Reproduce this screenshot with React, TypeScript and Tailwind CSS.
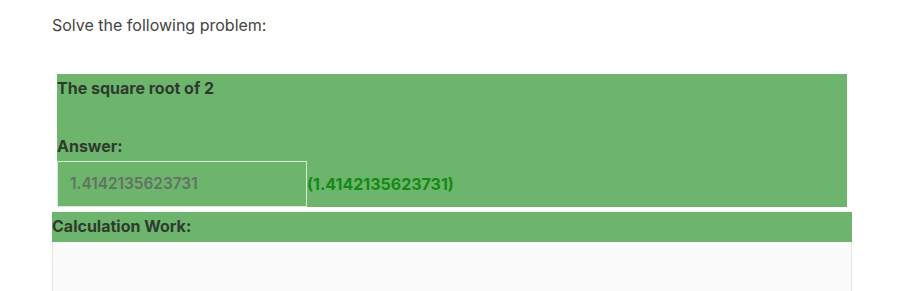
export default function App() {
  return (
    <div className="min-h-screen bg-white font-['Inter',sans-serif] text-[16px]">
      <div className="w-[800px] ml-[52px] pt-[14px]">
        <p className="text-[#444] leading-[22px]">Solve the following problem:</p>
        <div className="mt-[38px] ml-[5px] w-[790px] h-[133px] bg-[#6db56d] flex flex-col">
          <p className="mt-[4px] font-bold text-[#2f3a2f] leading-[20px]">The square root of 2</p>
          <p className="mt-[38px] font-bold text-[#2f3a2f] leading-[20px]">Answer:</p>
          <div className="mt-[5px] flex items-center">
            <div className="w-[250px] h-[46px] border border-[#d6ead6] flex items-center pl-[12px] text-[15.4px] font-semibold text-[#627262]">
              1.4142135623731
            </div>
            <span className="font-bold text-[#138a13]">(1.4142135623731)</span>
          </div>
        </div>
        <div className="mt-[5px] h-[30px] bg-[#6db56d] flex items-center font-bold text-[#2f3a2f] leading-[20px] pb-[2px]">
          Calculation Work:
        </div>
        <div className="h-[60px] bg-[#fafafa] border-x border-[#e6e6e6]" />
      </div>
    </div>
  )
}
